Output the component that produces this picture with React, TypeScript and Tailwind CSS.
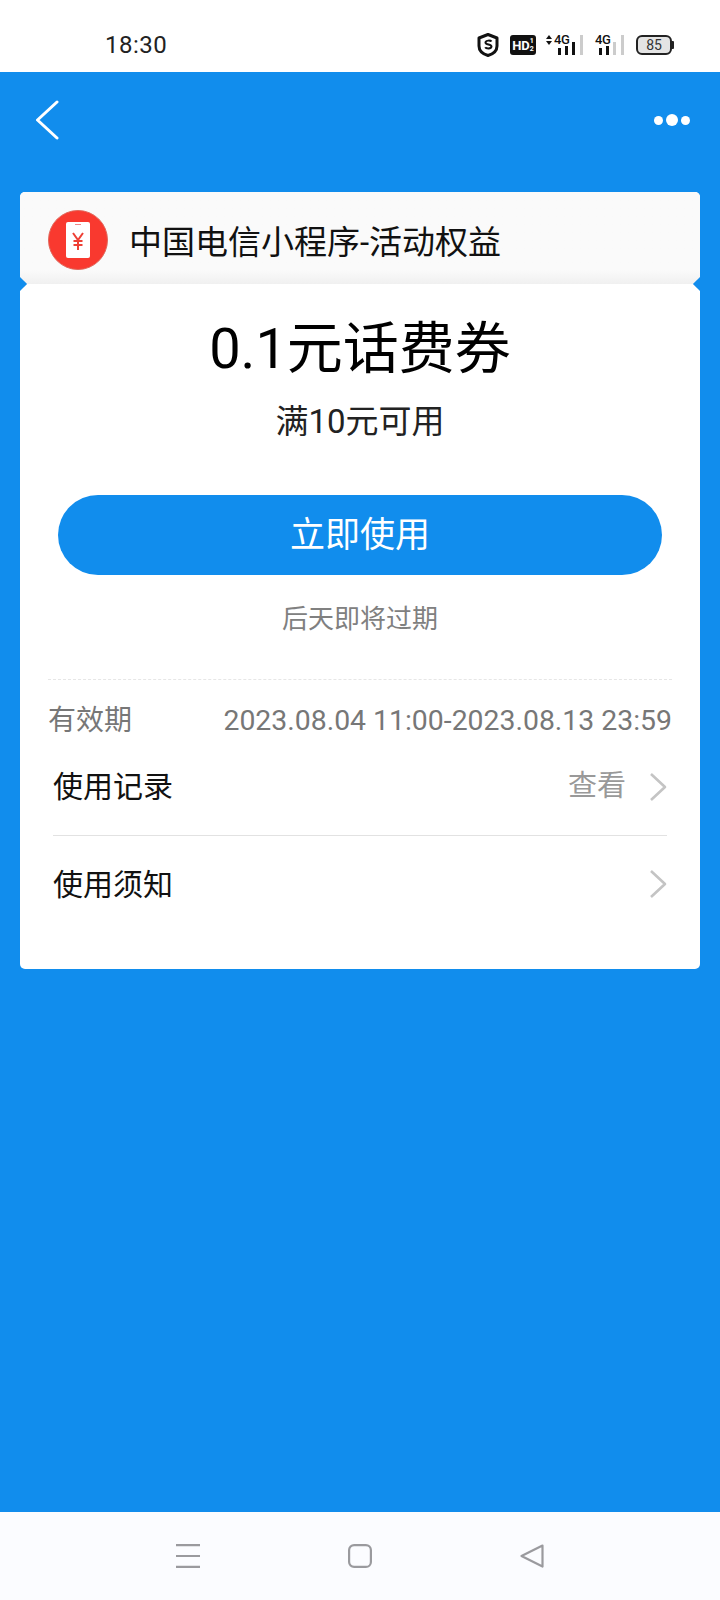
const cjk = "font-['Roboto','Noto_Sans_CJK_SC',sans-serif]";

function Signal({ active, arrows }: { active: number; arrows?: boolean }) {
  const bars = [7, 9, 13];
  return (
    <div className={`relative h-[24px] ${arrows ? 'w-[37px]' : 'w-[29px]'}`}>
      {arrows && (
        <svg className="absolute left-0 top-[2px]" width="6" height="10" viewBox="0 0 6 10">
          <path d="M3 0 6 4H0zM3 10 0 6h6z" fill="#111" />
        </svg>
      )}
      <span
        className={`absolute top-[-1px] font-['Roboto'] text-[13px] font-medium leading-[16px] tracking-[-0.3px] text-[#111] ${arrows ? 'left-[8px]' : 'left-0'}`}
      >
        4G
      </span>
      <div className={`absolute bottom-[2px] flex items-end gap-[4px] ${arrows ? 'left-[12px]' : 'left-[4px]'}`}>
        {bars.map((h, i) => (
          <div key={i} style={{ height: h }} className={`w-[3px] ${i < active ? 'bg-[#111]' : 'bg-[#ccc]'}`} />
        ))}
      </div>
      <div className="absolute bottom-[2px] right-0 h-[20px] w-[3px] bg-[#ccc]" />
    </div>
  );
}

function StatusBar() {
  return (
    <div className="flex h-[72px] items-start justify-between bg-white pl-[105px] pr-[46px] pt-[33px]">
      <span className="font-['Roboto'] text-[24px] leading-[24px] tracking-[0.5px] text-[#222]">18:30</span>
      <div className="flex items-center">
        <svg width="22" height="24" viewBox="0 0 22 24">
          <path d="M11 1.5 20 5v8c0 5-4 8-9 9.5C6 21 2 18 2 13V5z" fill="#fff" stroke="#111" strokeWidth="3" strokeLinejoin="round" />
          <path d="M14.5 8.5c-.6-1-5.5-1.6-6 .8-.4 2.8 6.2 1.6 6 4.4-.3 2.4-5.5 2-6.3.6" fill="none" stroke="#111" strokeWidth="2" />
        </svg>
        <div className="ml-[11px] flex h-[20px] w-[26px] items-center justify-center rounded-[3px] bg-[#111] font-['Roboto'] text-[13px] font-bold leading-none text-white">
          HD<span className="text-[7px] leading-[8px]">1<br />2</span>
        </div>
        <div className="ml-[10px]">
          <Signal active={3} arrows />
        </div>
        <div className="ml-[12px]">
          <Signal active={2} />
        </div>
        <div className="ml-[12px] flex items-center">
          <div className="flex h-[20px] w-[36px] items-center justify-center rounded-[6px] border-[2px] border-[#222] bg-[#e4e4e4] font-['Roboto'] text-[14px] leading-none text-[#333]">
            85
          </div>
          <div className="h-[8px] w-[2px] rounded-r-[1px] bg-[#222]" />
        </div>
      </div>
    </div>
  );
}

function Chevron() {
  return (
    <svg width="18" height="30" viewBox="0 0 18 30" fill="none">
      <path d="M2 2 16 15 2 28" stroke="#c4c4c4" strokeWidth="2.6" strokeLinejoin="round" />
    </svg>
  );
}

function Notch({ side }: { side: 'left' | 'right' }) {
  return (
    <div
      className={`absolute top-[87px] h-[10px] w-[10px] rotate-45 bg-[#118ded] ${side === 'left' ? 'left-[-5px]' : 'right-[-5px]'}`}
    />
  );
}

export default function App() {
  return (
    <div className={`flex h-[1600px] w-[720px] flex-col overflow-hidden bg-[#118ded] ${cjk}`}>
      <StatusBar />

      <div className="mb-[24px] flex h-[96px] items-center justify-between pl-[35px] pr-[30px]">
        <svg width="24" height="40" viewBox="0 0 24 40" fill="none">
          <path d="M22 2 2.5 20 22 38" stroke="#fff" strokeWidth="3" strokeLinecap="round" strokeLinejoin="round" />
        </svg>
        <div className="flex items-center gap-[3px]">
          <div className="h-[9px] w-[9px] rounded-full bg-white" />
          <div className="h-[12px] w-[12px] rounded-full bg-white" />
          <div className="h-[9px] w-[9px] rounded-full bg-white" />
        </div>
      </div>

      <div className="relative mx-[20px] h-[777px] overflow-hidden rounded-[5px] bg-white">
        <div className="flex h-[92px] items-center bg-gradient-to-b from-[#fafafa] from-85% to-[#f0f0f0] pl-[28px] pt-[4px]">
          <div className="flex h-[60px] w-[60px] items-center justify-center rounded-full border border-[#e0685c] bg-[#f9392f]">
            <div className="relative flex h-[36px] w-[24px] items-center justify-center rounded-[2px] bg-white">
              <div className="absolute top-[2px] h-[1px] w-[6px] bg-[#e88]" />
              <svg width="12" height="18" viewBox="0 0 12 18" fill="none" stroke="#ee4035" strokeWidth="2" className="mt-[2px]">
                <path d="M1 1 6 8 11 1M6 8v10M1.5 9h9M1.5 13h9" />
              </svg>
            </div>
          </div>
          <span className="ml-[21px] mt-[4px] text-[33px] leading-none text-[#111]">中国电信小程序-活动权益</span>
        </div>
        <Notch side="left" />
        <Notch side="right" />

        <div className="flex flex-col items-center">
          <h1 className="mt-[27px] text-[56px] font-normal leading-[76px] text-black">0.1元话费券</h1>
          <p className="mt-[13px] text-[33px] leading-[44px] text-[#222]">满10元可用</p>
          <button className="mt-[51px] flex h-[80px] w-[604px] items-center justify-center rounded-full bg-[#118ded] pt-[2px] text-[35px] text-white">
            立即使用
          </button>
          <p className="mt-[26px] text-[26px] leading-[36px] text-[#808080]">后天即将过期</p>
        </div>

        <div className="mx-[28px] mt-[42px] border-t border-dashed border-[#e6e6e6]" />

        <div className="mx-[28px] mt-[21px] flex h-[40px] items-center justify-between text-[28px] text-[#777]">
          <span>有效期</span>
          <span className="text-[28.4px]">2023.08.04 11:00-2023.08.13 23:59</span>
        </div>

        <div className="mx-[33px] mt-[7px] flex h-[88px] items-center justify-between border-b border-[#e2e2e2] pb-[10px]">
          <span className="text-[30px] text-[#111]">使用记录</span>
          <div className="flex items-center gap-[23px]">
            <span className="text-[29px] text-[#999]">查看</span>
            <Chevron />
          </div>
        </div>

        <div className="mx-[33px] flex h-[96px] items-center justify-between">
          <span className="text-[30px] text-[#111]">使用须知</span>
          <Chevron />
        </div>
      </div>

      <div className="mt-auto flex h-[88px] items-center gap-[148px] bg-[#fbfcff] pl-[176px]">
        <svg width="24" height="24" viewBox="0 0 24 24" fill="none" stroke="#9a9a9e" strokeWidth="2.2">
          <path d="M0 1.1h24M0 12h24M0 22.9h24" />
        </svg>
        <svg width="24" height="24" viewBox="0 0 24 24" fill="none" stroke="#9a9a9e" strokeWidth="2.2">
          <rect x="1.1" y="1.1" width="21.8" height="21.8" rx="5" />
        </svg>
        <svg width="24" height="24" viewBox="0 0 24 24" fill="none" stroke="#9a9a9e" strokeWidth="2.2" strokeLinejoin="round">
          <path d="M22.5 1.5 1.5 12l21 10.5z" />
        </svg>
      </div>
    </div>
  );
}
